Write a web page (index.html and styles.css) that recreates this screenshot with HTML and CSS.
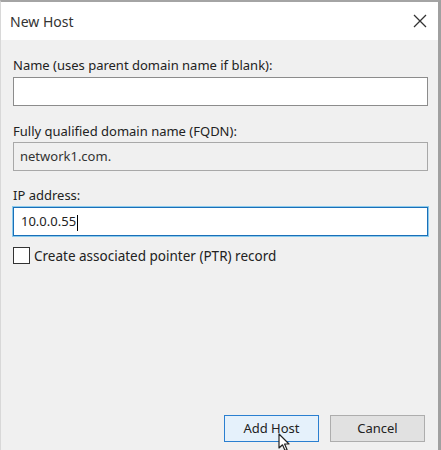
FILE: index.html
```html
<!DOCTYPE html>
<html lang="en">
<head>
    <meta charset="UTF-8">
    <title>New Host</title>
    <link rel="stylesheet" href="styles.css">
</head>
<body>
    <div class="window">
        <div class="titlebar">
            <span class="title">New Host</span>
            <svg class="close" width="14" height="14" viewBox="0 0 14 14">
                <path d="M1 1 L13 13 M13 1 L1 13" stroke="#333" stroke-width="1.3" fill="none"/>
            </svg>
        </div>

        <div class="content">
            <label class="field-label label-name" for="name">Name (uses parent domain name if blank):</label>
            <div class="input" id="name"></div>

            <label class="field-label label-fqdn">Fully qualified domain name (FQDN):</label>
            <div class="input readonly">network1.com.</div>

            <label class="field-label label-ip" for="ip">IP address:</label>
            <div class="input focused" id="ip">10.0.0.55<span class="caret"></span></div>

            <div class="check-row">
                <span class="checkbox"></span>
                <span class="check-text">Create associated pointer (PTR) record</span>
            </div>

            <div class="buttons">
                <div class="btn default">Add Host</div>
                <div class="btn">Cancel</div>
            </div>
        </div>

        <svg class="pointer" width="14" height="20" viewBox="0 0 14 20">
            <path d="M1 1 L1 15 L4.5 11.8 L7 17.5 L9 16.6 L6.6 11 L11 11 Z" fill="#fff" stroke="#222" stroke-width="1.2" stroke-linejoin="round"/>
        </svg>
    </div>
</body>
</html>
```

FILE: styles.css
```css
body {
    margin: 0;
    padding: 0;
    font-family: "Noto Sans", "Open Sans", sans-serif;
    font-size: 13px;
    color: #222;
    background: #fff;
}

.window {
    position: relative;
    width: 437px;
    height: 448px;
    border-top: 2px solid #a4a4a4;
    border-left: 1px solid #d8d8d8;
    border-right: 3px solid #a0a0a0;
    background: #f0f0f0;
    display: flex;
    flex-direction: column;
    overflow: hidden;
}

.titlebar {
    height: 38px;
    background: #fff;
    display: flex;
    align-items: center;
    justify-content: space-between;
    padding: 0 11px 0 9px;
}

.title {
    font-size: 14px;
    color: #333;
}

.content {
    flex: 1;
    display: flex;
    flex-direction: column;
    padding: 0 10px 8px 12px;
}

.field-label {
    display: block;
    height: 16px;
    line-height: 16px;
    color: #222;
}

.label-name {
    margin: 17px 0 4px;
}

.label-fqdn {
    margin: 17px 0 3px;
}

.label-ip {
    margin: 16px 0 4px;
}

.input {
    height: 27px;
    line-height: 27px;
    border: 1px solid #8c8c8c;
    background: #fff;
    padding: 0 6px;
    box-sizing: content-box;
}

.input.readonly {
    background: #f0f0f0;
    border-color: #a8a8a8;
    color: #333;
}

.input.focused {
    border-color: #1a6fb8;
    box-shadow: 0 0 0 1px #8ccbec;
    padding-left: 7px;
}

.caret {
    display: inline-block;
    width: 1px;
    height: 16px;
    background: #000;
    vertical-align: middle;
    margin-left: 1px;
}

.check-row {
    display: flex;
    align-items: center;
    margin-top: 11px;
    height: 17px;
}

.checkbox {
    width: 15px;
    height: 15px;
    border: 1px solid #333;
    background: #fff;
    margin-right: 4px;
}

.check-text {
    font-size: 13.5px;
}

.buttons {
    margin-top: auto;
    display: flex;
    justify-content: flex-end;
    gap: 11px;
    padding-right: 3px;
}

.btn {
    width: 93px;
    height: 25px;
    line-height: 25px;
    text-align: center;
    border: 1px solid #adadad;
    background: #e1e1e1;
    color: #222;
}

.btn.default {
    border-color: #2a7fd0;
    background: #e5f1fb;
}

.pointer {
    position: absolute;
    left: 277px;
    top: 431px;
}
```
